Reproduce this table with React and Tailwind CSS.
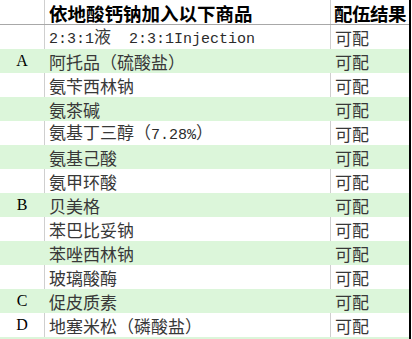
import React from "react";

const CJK = "font-['Noto_Sans_CJK_SC',sans-serif]";
const MONO = "font-['Liberation_Mono','Noto_Sans_CJK_SC',monospace] text-[15px] text-[#2b2b2b]";

const ROWS = [
  { tag: "", name: <><span className={MONO}>2:3:1</span>液<span className={MONO}>{"  "}2:3:1Injection</span></> },
  { tag: "A", name: "阿托品（硫酸盐）" },
  { tag: "", name: "氨苄西林钠" },
  { tag: "", name: "氨茶碱" },
  { tag: "", name: <>氨基丁三醇（<span className={MONO}>7.28%</span>）</> },
  { tag: "", name: "氨基己酸" },
  { tag: "", name: "氨甲环酸" },
  { tag: "B", name: "贝美格" },
  { tag: "", name: "苯巴比妥钠" },
  { tag: "", name: "苯唑西林钠" },
  { tag: "", name: "玻璃酸酶" },
  { tag: "C", name: "促皮质素" },
  { tag: "D", name: "地塞米松（磷酸盐）" },
];

function Row({ tag, name, green }) {
  const bg = green ? "bg-[#dcf6da]" : "bg-white";
  const line = green ? "border-[#dcf6da]" : "border-[#cfcfcf]";
  return (
    <div className={`flex h-[24px] ${bg}`}>
      <div className={`flex w-[45px] shrink-0 items-center justify-center border-r ${line} font-['Liberation_Serif',serif] text-[16px] text-black`}>
        {tag}
      </div>
      <div className={`flex w-[286px] shrink-0 items-center whitespace-pre border-r ${line} pl-[4px] pt-[2px] ${CJK} text-[17px] leading-[20px] text-[#383838]`}>
        <span>{name}</span>
      </div>
      <div className={`flex w-[78px] shrink-0 items-center whitespace-nowrap pl-[4px] pt-[2px] ${CJK} text-[17px] leading-[20px] text-[#383838]`}>
        可配
      </div>
    </div>
  );
}

export default function App() {
  return (
    <div className="h-[339px] w-[412px] overflow-hidden bg-white">
      <div className="w-[411px] border-r-2 border-black">
        <div className="flex h-[25px] border-b border-[#a8a8a8] bg-white">
          <div className="w-[45px] shrink-0 border-r border-[#cfcfcf]" />
          <div className={`flex w-[286px] shrink-0 items-center whitespace-nowrap border-r border-[#cfcfcf] pl-[4px] pt-[2px] ${CJK} text-[18.5px] font-bold leading-[21px] text-black`}>
            依地酸钙钠加入以下商品
          </div>
          <div className={`flex w-[78px] shrink-0 items-center whitespace-nowrap pl-[3px] pt-[2px] ${CJK} text-[18.5px] font-bold leading-[21px] tracking-[-0.5px] text-black`}>
            配伍结果
          </div>
        </div>
        {ROWS.map((r, i) => (
          <Row key={i} tag={r.tag} name={r.name} green={i % 2 === 1} />
        ))}
        <div className="h-[4px] bg-[#dcf6da]" />
      </div>
    </div>
  );
}
